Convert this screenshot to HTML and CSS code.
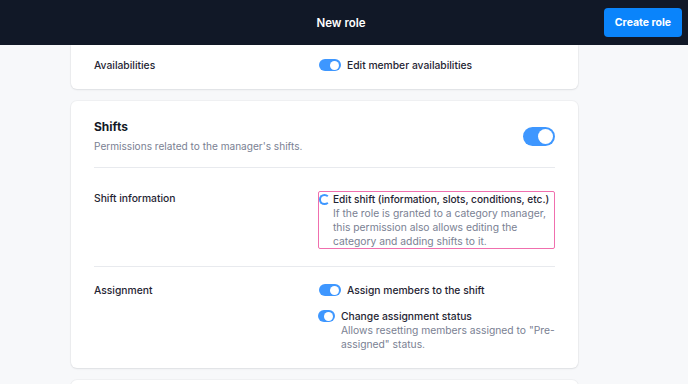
FILE: index.html
```html
<!DOCTYPE html>
<html lang="en">
<head>
<meta charset="utf-8">
<title>New role</title>
<link rel="stylesheet" href="styles.css">
</head>
<body>
<header class="topbar">
  <div class="topbar-spacer"></div>
  <h1 class="topbar-title">New role</h1>
  <div class="topbar-actions"><button class="btn-primary">Create role</button></div>
</header>
<main class="content">
  <section class="card card-cut">
    <div class="row row-compact">
      <div class="row-label">Availabilities</div>
      <div class="row-items">
        <div class="perm">
          <span class="toggle on"></span>
          <div class="perm-text"><div class="perm-title">Edit member availabilities</div></div>
        </div>
      </div>
    </div>
  </section>

  <section class="card">
    <div class="card-head">
      <div class="card-head-text">
        <h2 class="card-title">Shifts</h2>
        <p class="card-sub">Permissions related to the manager's shifts.</p>
      </div>
      <span class="toggle toggle-lg on"></span>
    </div>
    <div class="row row-first">
      <div class="row-label">Shift information</div>
      <div class="row-items">
        <div class="perm perm-highlight">
          <span class="toggle-squished"></span>
          <div class="perm-text">
            <div class="perm-title">Edit shift (information, slots, conditions, etc.)</div>
            <div class="perm-desc">If the role is granted to a category manager, this permission also allows editing the category and adding shifts to it.</div>
          </div>
        </div>
      </div>
    </div>
    <div class="row row-last">
      <div class="row-label">Assignment</div>
      <div class="row-items">
        <div class="perm">
          <span class="toggle on"></span>
          <div class="perm-text"><div class="perm-title">Assign members to the shift</div></div>
        </div>
        <div class="perm">
          <span class="toggle toggle-narrow on"></span>
          <div class="perm-text">
            <div class="perm-title">Change assignment status</div>
            <div class="perm-desc">Allows resetting members assigned to "Pre-assigned" status.</div>
          </div>
        </div>
      </div>
    </div>
  </section>

  <section class="card card-next"></section>
</main>
</body>
</html>
```

FILE: styles.css
```css
* { box-sizing: border-box; }
html, body { margin: 0; padding: 0; }
body {
  background: #f7f8fa;
  font-family: Inter, "Noto Sans", sans-serif;
  color: #1f2533;
  height: 384px;
  overflow: hidden;
}
.topbar {
  height: 45px;
  background: #111827;
  display: grid;
  grid-template-columns: 1fr auto 1fr;
  align-items: center;
  padding: 0 6px 0 0;
}
.topbar-title {
  margin: 0;
  font-size: 11.5px;
  font-weight: 600;
  color: #ffffff;
}
.topbar-actions { display: flex; justify-content: flex-end; }
.btn-primary {
  background: #0a84fb;
  color: #fff;
  border: 0;
  border-radius: 4px;
  height: 29px;
  width: 78px;
  font-family: inherit;
  font-size: 10.5px;
  font-weight: 700;
  padding: 0;
}
.content {
  width: 507px;
  margin-left: 71px;
  display: flex;
  flex-direction: column;
  gap: 12px;
}
.card {
  background: #fff;
  border-radius: 6px;
  box-shadow: 0 1px 2px rgba(17, 24, 39, 0.08), 0 0 0 1px rgba(17, 24, 39, 0.03);
  padding: 0 23px;
}
.card-cut {
  border-radius: 0 0 6px 6px;
  height: 44px;
  display: flex;
  align-items: center;
  padding-bottom: 4px;
}
.card-cut .row { width: 100%; padding: 0; border: 0; }
.card-next { height: 40px; }
.card-head {
  display: flex;
  align-items: center;
  justify-content: space-between;
  padding: 17px 0 13px;
  border-bottom: 1px solid #e8eaee;
}
.card-title {
  margin: 0;
  font-size: 12px;
  font-weight: 700;
  line-height: 18px;
  color: #141a26;
}
.card-sub {
  margin: 2px 0 0;
  font-size: 10.1px;
  line-height: 16px;
  color: #7a8193;
}
.row {
  display: grid;
  grid-template-columns: 225px 1fr;
  padding: 16px 0 17px;
  border-bottom: 1px solid #e8eaee;
}
.row-first { padding: 23px 0 17px; }
.row-last { border-bottom: 0; }
.row-label {
  font-size: 10.3px;
  font-weight: 500;
  line-height: 14px;
  color: #1f2533;
}
.row-items {
  display: flex;
  flex-direction: column;
  gap: 12px;
}
.perm {
  display: flex;
  align-items: flex-start;
  gap: 6px;
}
.perm-text { flex: 1; min-width: 0; }
.perm-title {
  font-size: 10.3px;
  font-weight: 500;
  line-height: 14px;
  color: #1f2533;
}
.perm-desc {
  font-size: 10.3px;
  line-height: 14px;
  color: #7a8193;
}
.perm-highlight {
  border: 1.5px solid #f06fae;
  border-radius: 2px;
  margin-left: -1px;
  padding: 0;
  gap: 3px;
}
.perm-highlight .perm-title { font-size: 10.15px; }
.toggle {
  position: relative;
  flex: none;
  width: 22px;
  height: 12px;
  border-radius: 6px;
  background: #3e97ff;
  margin-top: 1px;
}
.toggle::after {
  content: "";
  position: absolute;
  top: 1.5px;
  right: 2px;
  width: 9px;
  height: 9px;
  border-radius: 50%;
  background: #fff;
}
.toggle-narrow { width: 17px; margin-left: -1px; }
.toggle-lg {
  width: 32px;
  height: 19px;
  border-radius: 10px;
  margin-top: 0;
}
.toggle-lg::after {
  top: 2px;
  right: 2.5px;
  width: 15px;
  height: 15px;
}
.toggle-squished {
  flex: none;
  width: 11px;
  height: 11px;
  margin-top: 1.5px;
  border: 2px solid #3e97ff;
  border-right-color: transparent;
  border-radius: 50%;
}
```
